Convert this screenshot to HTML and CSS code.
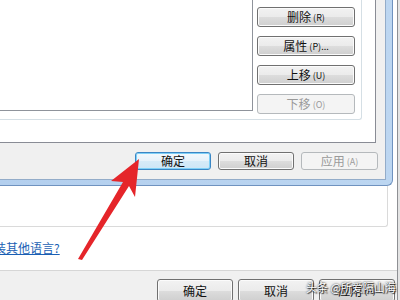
FILE: index.html
```html
<!DOCTYPE html>
<html lang="zh-CN">
<head>
<meta charset="utf-8">
<title>区域和语言</title>
<link rel="stylesheet" href="styles.css">
</head>
<body>
<div class="screen">
  <div class="back">
    <div class="dialog">
      <div class="dialog-body">
        <div class="tabpage">
          <div class="groupbox">
            <div class="listbox"></div>
            <div class="side-buttons">
              <button class="btn side">删除<span class="acc">(R)</span></button>
              <button class="btn side">属性<span class="acc">(P)...</span></button>
              <button class="btn side">上移<span class="acc">(U)</span></button>
              <button class="btn side disabled">下移<span class="acc">(O)</span></button>
            </div>
          </div>
        </div>
        <div class="dialog-buttons">
          <button class="btn dlg default">确定</button>
          <button class="btn dlg">取消</button>
          <button class="btn dlg wide disabled">应用<span class="acc">(A)</span></button>
        </div>
      </div>
    </div>
    <div class="back-box"></div>
    <div class="link-row"><a class="link" href="#">如何安装其他语言?</a></div>
    <div class="back-bar">
      <button class="btn bar">确定</button>
      <button class="btn bar">取消</button>
      <button class="btn bar">应用<span class="acc">(A)</span></button>
    </div>
  </div>
  <svg class="arrow" width="400" height="300" viewBox="0 0 400 300">
    <polygon points="139,159 111,181 123,182 78,259 82,260 129,186 135,197" fill="#e5252a"/>
  </svg>
  <div class="watermark">头条 @所爱隔山海</div>
</div>
</body>
</html>
```

FILE: styles.css
```css
html, body {
  margin: 0;
  padding: 0;
}

body {
  font-family: "Noto Sans CJK SC", "Noto Sans", sans-serif;
  font-size: 12px;
  color: #000;
}

.screen {
  position: relative;
  width: 400px;
  height: 300px;
  overflow: hidden;
  background: #e4e4e4;
}

.back {
  width: 397px;
  height: 300px;
  background: #ffffff;
  border-right: 1px solid #8e9094;
  display: flex;
  flex-direction: column;
}

.dialog {
  flex: none;
  box-sizing: border-box;
  width: 393px;
  height: 186px;
  padding-right: 6px;
  padding-bottom: 5px;
  background: linear-gradient(90deg, #b3cfee, #bcd6f1);
  border-right: 1px solid #6f92bf;
  border-bottom: 1px solid #6f92bf;
  border-bottom-right-radius: 6px;
}

.dialog-body {
  box-sizing: border-box;
  width: 386px;
  height: 180px;
  background: #f0f0f0;
  border-right: 1px solid #93acc9;
  border-bottom: 1px solid #93acc9;
}

.tabpage {
  box-sizing: border-box;
  width: 376px;
  height: 143px;
  background: #ffffff;
  border-right: 1px solid #898c95;
  border-bottom: 1px solid #898c95;
}

.groupbox {
  box-sizing: border-box;
  width: 362px;
  height: 120px;
  display: flex;
  border-right: 1px solid #d5dfe5;
  border-bottom: 1px solid #d5dfe5;
  border-bottom-right-radius: 3px;
}

.listbox {
  box-sizing: border-box;
  width: 253px;
  height: 111px;
  background: #ffffff;
  border-right: 1px solid #8f939b;
  border-bottom: 1px solid #8f939b;
}

.side-buttons {
  margin-left: 4px;
  padding-top: 7px;
  display: flex;
  flex-direction: column;
  gap: 9px;
}

.btn {
  box-sizing: border-box;
  margin: 0;
  padding: 0;
  border: 1px solid #707070;
  border-radius: 3px;
  background: linear-gradient(#f2f2f2 0%, #ebebeb 50%, #dddddd 50%, #cfcfcf 100%);
  box-shadow: inset 0 0 0 1px #fbfbfb;
  font-family: "Noto Sans CJK SC", "Noto Sans", sans-serif;
  font-size: 12px;
  line-height: 1;
  color: #111;
  display: flex;
  align-items: center;
  justify-content: center;
}

.acc {
  font-size: 9px;
  margin-left: 2px;
}

.btn.disabled {
  border-color: #b5b9bc;
  background: #f4f4f4;
  box-shadow: none;
  color: #9a9a9a;
}

.btn.default {
  border-color: #3a86c4;
  background: linear-gradient(#f3f9fd 0%, #e6f2fa 50%, #d6ebf8 50%, #cde6f6 100%);
  box-shadow: inset 0 0 0 1px #7fd0f7;
}

.side {
  width: 98px;
  height: 20px;
}

.dialog-buttons {
  display: flex;
  justify-content: flex-end;
  gap: 7px;
  padding-top: 9px;
  padding-right: 7px;
}

.dlg {
  width: 76px;
  height: 18px;
}

.dlg.wide {
  width: 77px;
}

.back-box {
  flex: none;
  box-sizing: border-box;
  width: 388px;
  height: 41px;
  border-right: 1px solid #dadada;
  border-bottom: 1px solid #dadada;
  border-bottom-right-radius: 3px;
}

.link-row {
  flex: none;
  height: 43px;
  box-sizing: border-box;
  padding-top: 13px;
  white-space: nowrap;
  line-height: 16px;
}

.link {
  margin-left: -42px;
  color: #1a5fb4;
  text-decoration: underline;
  font-size: 12px;
}

.back-bar {
  flex: 1;
  background: #f0f0f0;
  border-top: 1px solid #d6d6d6;
  display: flex;
  align-items: flex-start;
  gap: 5px;
  padding-top: 8px;
  padding-left: 157px;
}

.bar {
  width: 76px;
  height: 23px;
  flex: none;
}

.arrow {
  position: absolute;
  left: 0;
  top: 0;
  pointer-events: none;
}

.watermark {
  position: absolute;
  left: 306px;
  top: 280px;
  font-size: 11px;
  line-height: 14px;
  color: #ffffff;
  white-space: nowrap;
  text-shadow: 0 0 2px #000, 1px 1px 1px #333;
}
```
